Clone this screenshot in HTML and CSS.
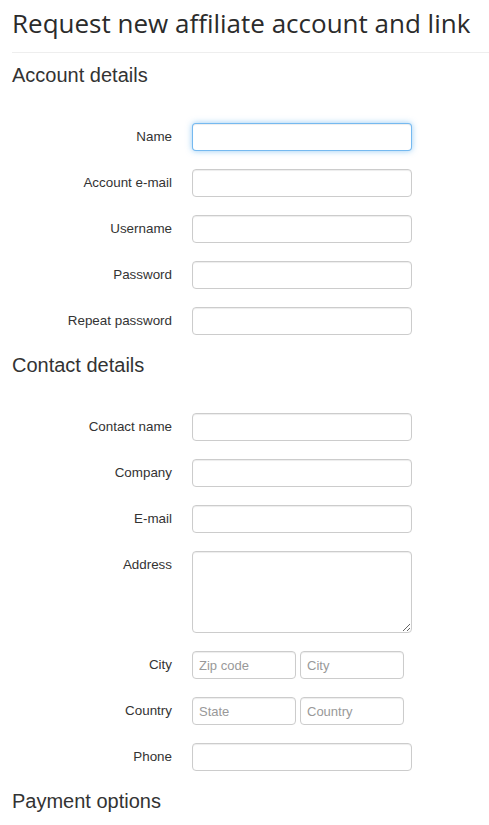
FILE: index.html
```html
<!DOCTYPE html>
<html lang="en">
<head>
  <meta charset="UTF-8" />
  <meta name="viewport" content="width=device-width, initial-scale=1.0"/>
  <title>Request new affiliate account and link</title>
  <link rel="stylesheet" href="styles.css">
</head>
<body>
  <h1 class="page-title">Request new affiliate account and link</h1>

  <form class="affiliate-form">
    <h3 class="section-title">Account details</h3>

    <div class="row">
      <label>Name</label>
      <input type="text" class="field is-focus" />
    </div>
    <div class="row">
      <label>Account e-mail</label>
      <input type="text" class="field" />
    </div>
    <div class="row">
      <label>Username</label>
      <input type="text" class="field" />
    </div>
    <div class="row">
      <label>Password</label>
      <input type="password" class="field" />
    </div>
    <div class="row">
      <label>Repeat password</label>
      <input type="password" class="field" />
    </div>

    <h3 class="section-title">Contact details</h3>

    <div class="row">
      <label>Contact name</label>
      <input type="text" class="field" />
    </div>
    <div class="row">
      <label>Company</label>
      <input type="text" class="field" />
    </div>
    <div class="row">
      <label>E-mail</label>
      <input type="text" class="field" />
    </div>
    <div class="row">
      <label>Address</label>
      <textarea class="field area"></textarea>
    </div>
    <div class="row">
      <label>City</label>
      <div class="split">
        <input type="text" class="field half" placeholder="Zip code" />
        <input type="text" class="field half" placeholder="City" />
      </div>
    </div>
    <div class="row">
      <label>Country</label>
      <div class="split">
        <input type="text" class="field half" placeholder="State" />
        <input type="text" class="field half" placeholder="Country" />
      </div>
    </div>
    <div class="row">
      <label>Phone</label>
      <input type="text" class="field" />
    </div>

    <h3 class="section-title">Payment options</h3>
    <div class="payment-box"></div>
  </form>
</body>
</html>
```

FILE: styles.css
```css
body {
  margin: 0;
  padding-left: 12px;
  font-family: "Liberation Sans", Arial, sans-serif;
  color: #333;
  background: #fff;
}
.page-title {
  font-family: "Open Sans", sans-serif;
  font-size: 26px;
  font-weight: 500;
  line-height: 40px;
  margin: 0;
  padding: 3px 0 9px;
  border-bottom: 1px solid #eee;
  color: #2b2b2b;
  white-space: nowrap;
}
.section-title {
  font-size: 20px;
  font-weight: normal;
  line-height: 24px;
  margin: 0 0 36px;
}
.affiliate-form {
  padding-top: 10px;
}
.row {
  display: flex;
  align-items: flex-start;
  margin-bottom: 18px;
}
.row label {
  width: 160px;
  margin-right: 20px;
  text-align: right;
  font-size: 13.4px;
  line-height: 28px;
}
.field {
  box-sizing: border-box;
  width: 220px;
  height: 28px;
  padding: 4px 6px;
  margin: 0;
  border: 1px solid #ccc;
  border-radius: 4px;
  box-shadow: inset 0 1px 1px rgba(0, 0, 0, 0.075);
  font-family: "Liberation Sans", Arial, sans-serif;
  font-size: 13px;
  color: #555;
  background: #fff;
}
.field::placeholder {
  color: #999;
}
.is-focus {
  border-color: rgba(82, 168, 236, 0.8);
  box-shadow: inset 0 1px 1px rgba(0, 0, 0, 0.075), 0 0 6px rgba(82, 168, 236, 0.6);
}
.area {
  height: 82px;
  resize: both;
}
.split {
  display: flex;
  gap: 4px;
}
.half {
  width: 104px;
}
.payment-box {
  margin-left: 128px;
  height: 3px;
  background: #fafafa;
}
```
